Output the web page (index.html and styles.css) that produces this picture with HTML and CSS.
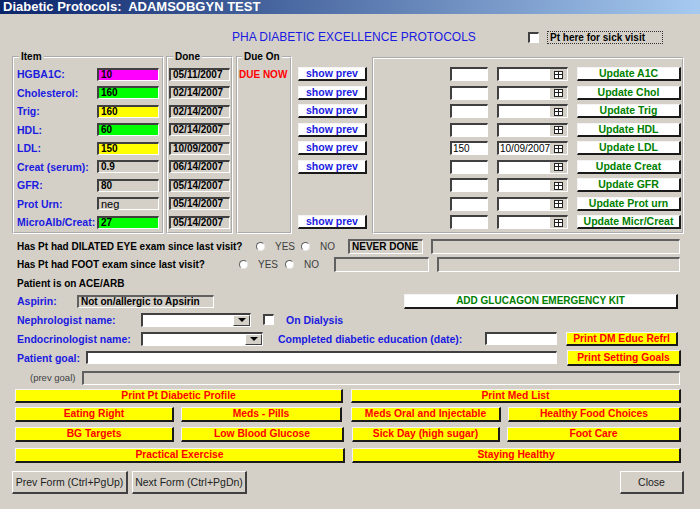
FILE: index.html
```html
<!DOCTYPE html>
<html lang="en">
<head>
    <meta charset="UTF-8">
    <meta name="viewport" content="width=device-width, initial-scale=1.0">
    <title>Diabetic Protocols</title>
    <link rel="stylesheet" href="styles.css">
</head>
<body>
    <div class="titlebar">Diabetic Protocols:&nbsp; ADAMSOBGYN TEST</div>

    <div class="header">
        <div class="form-title">PHA DIABETIC EXCELLENCE PROTOCOLS</div>
        <span class="checkbox"></span>
        <span class="sick">Pt here for sick visit</span>
    </div>

    <div class="groups">
        <fieldset class="grp grp-item">
            <legend>Item</legend>
            <div class="row"><span class="lbl">HGBA1C:</span><span class="val pink">10</span></div>
            <div class="row"><span class="lbl">Cholesterol:</span><span class="val lime">160</span></div>
            <div class="row"><span class="lbl">Trig:</span><span class="val yel">160</span></div>
            <div class="row"><span class="lbl">HDL:</span><span class="val lime">60</span></div>
            <div class="row"><span class="lbl">LDL:</span><span class="val yel">150</span></div>
            <div class="row"><span class="lbl">Creat (serum):</span><span class="val">0.9</span></div>
            <div class="row"><span class="lbl">GFR:</span><span class="val">80</span></div>
            <div class="row"><span class="lbl">Prot Urn:</span><span class="val plain">neg</span></div>
            <div class="row"><span class="lbl">MicroAlb/Creat:</span><span class="val lime">27</span></div>
        </fieldset>

        <fieldset class="grp grp-done">
            <legend>Done</legend>
            <div class="row"><span class="date">05/11/2007</span></div>
            <div class="row"><span class="date">02/14/2007</span></div>
            <div class="row"><span class="date">02/14/2007</span></div>
            <div class="row"><span class="date">02/14/2007</span></div>
            <div class="row"><span class="date">10/09/2007</span></div>
            <div class="row"><span class="date">06/14/2007</span></div>
            <div class="row"><span class="date">05/14/2007</span></div>
            <div class="row"><span class="date">05/14/2007</span></div>
            <div class="row"><span class="date">05/14/2007</span></div>
        </fieldset>

        <fieldset class="grp grp-due">
            <legend>Due On</legend>
            <div class="row"><span class="due">DUE NOW</span></div>
        </fieldset>

        <div class="prev-col">
            <div class="row"><span class="raised btn-prev">show prev</span></div>
            <div class="row"><span class="raised btn-prev">show prev</span></div>
            <div class="row"><span class="raised btn-prev">show prev</span></div>
            <div class="row"><span class="raised btn-prev">show prev</span></div>
            <div class="row"><span class="raised btn-prev">show prev</span></div>
            <div class="row"><span class="raised btn-prev">show prev</span></div>
            <div class="row"></div>
            <div class="row"></div>
            <div class="row"><span class="raised btn-prev">show prev</span></div>
        </div>

        <div class="panel">
            <div class="row"><span class="inp"></span><span class="datein"><span></span><span class="cal"><svg width="9" height="8" viewBox="0 0 9 8"><rect x="0.5" y="0.5" width="8" height="7" fill="#fff" stroke="#222"/><path d="M0 3.5h9M4.5 0v8" stroke="#222"/></svg></span></span><span class="raised btn-upd">Update A1C</span></div>
            <div class="row"><span class="inp"></span><span class="datein"><span></span><span class="cal"><svg width="9" height="8" viewBox="0 0 9 8"><rect x="0.5" y="0.5" width="8" height="7" fill="#fff" stroke="#222"/><path d="M0 3.5h9M4.5 0v8" stroke="#222"/></svg></span></span><span class="raised btn-upd">Update Chol</span></div>
            <div class="row"><span class="inp"></span><span class="datein"><span></span><span class="cal"><svg width="9" height="8" viewBox="0 0 9 8"><rect x="0.5" y="0.5" width="8" height="7" fill="#fff" stroke="#222"/><path d="M0 3.5h9M4.5 0v8" stroke="#222"/></svg></span></span><span class="raised btn-upd">Update Trig</span></div>
            <div class="row"><span class="inp"></span><span class="datein"><span></span><span class="cal"><svg width="9" height="8" viewBox="0 0 9 8"><rect x="0.5" y="0.5" width="8" height="7" fill="#fff" stroke="#222"/><path d="M0 3.5h9M4.5 0v8" stroke="#222"/></svg></span></span><span class="raised btn-upd">Update HDL</span></div>
            <div class="row"><span class="inp">150</span><span class="datein"><span>10/09/2007</span><span class="cal"><svg width="9" height="8" viewBox="0 0 9 8"><rect x="0.5" y="0.5" width="8" height="7" fill="#fff" stroke="#222"/><path d="M0 3.5h9M4.5 0v8" stroke="#222"/></svg></span></span><span class="raised btn-upd">Update LDL</span></div>
            <div class="row"><span class="inp"></span><span class="datein"><span></span><span class="cal"><svg width="9" height="8" viewBox="0 0 9 8"><rect x="0.5" y="0.5" width="8" height="7" fill="#fff" stroke="#222"/><path d="M0 3.5h9M4.5 0v8" stroke="#222"/></svg></span></span><span class="raised btn-upd">Update Creat</span></div>
            <div class="row"><span class="inp"></span><span class="datein"><span></span><span class="cal"><svg width="9" height="8" viewBox="0 0 9 8"><rect x="0.5" y="0.5" width="8" height="7" fill="#fff" stroke="#222"/><path d="M0 3.5h9M4.5 0v8" stroke="#222"/></svg></span></span><span class="raised btn-upd">Update GFR</span></div>
            <div class="row"><span class="inp"></span><span class="datein"><span></span><span class="cal"><svg width="9" height="8" viewBox="0 0 9 8"><rect x="0.5" y="0.5" width="8" height="7" fill="#fff" stroke="#222"/><path d="M0 3.5h9M4.5 0v8" stroke="#222"/></svg></span></span><span class="raised btn-upd">Update Prot urn</span></div>
            <div class="row"><span class="inp"></span><span class="datein"><span></span><span class="cal"><svg width="9" height="8" viewBox="0 0 9 8"><rect x="0.5" y="0.5" width="8" height="7" fill="#fff" stroke="#222"/><path d="M0 3.5h9M4.5 0v8" stroke="#222"/></svg></span></span><span class="raised btn-upd">Update Micr/Creat</span></div>
        </div>
    </div>

    <div class="line eye">
        <span class="q">Has Pt had DILATED EYE exam since last visit?</span>
        <span class="radio"></span><span class="opt opt-yes">YES</span>
        <span class="radio"></span><span class="opt opt-no">NO</span>
        <span class="box box-a">NEVER DONE</span>
        <span class="box box-b"></span>
    </div>

    <div class="line foot">
        <span class="q">Has Pt had FOOT exam since last visit?</span>
        <span class="radio"></span><span class="opt opt-yes">YES</span>
        <span class="radio"></span><span class="opt opt-no">NO</span>
        <span class="box box-a"></span>
        <span class="box box-b"></span>
    </div>

    <div class="line ace">Patient is on ACE/ARB</div>

    <div class="line aspirin">
        <span class="blue lbl-aspirin">Aspirin:</span>
        <span class="box box-aspirin">Not on/allergic to Apsirin</span>
        <span class="raised btn-glucagon">ADD GLUCAGON EMERGENCY KIT</span>
    </div>

    <div class="line nephro">
        <span class="blue lbl-doc">Nephrologist name:</span>
        <span class="combo combo-neph"><span></span><span class="drop"><i class="arrow"></i></span></span>
        <span class="checkbox dialysis-check"></span>
        <span class="blue dialysis">On Dialysis</span>
    </div>

    <div class="line endo">
        <span class="blue lbl-doc">Endocrinologist name:</span>
        <span class="combo combo-endo"><span></span><span class="drop"><i class="arrow"></i></span></span>
        <span class="blue lbl-edu">Completed diabetic education (date):</span>
        <span class="inp inp-edu"></span>
        <span class="raised ybtn btn-edu">Print DM Educ Refrl</span>
    </div>

    <div class="line goal">
        <span class="blue lbl-goal">Patient goal:</span>
        <span class="inp inp-goal"></span>
        <span class="raised ybtn btn-goals">Print Setting Goals</span>
    </div>

    <div class="line prevgoal">
        <span class="lbl-prevgoal">(prev goal)</span>
        <span class="box box-prevgoal"></span>
    </div>

    <div class="yrow yrow-1">
        <span class="raised ybtn w-profile">Print Pt Diabetic Profile</span>
        <span class="raised ybtn w-medlist">Print Med List</span>
    </div>
    <div class="yrow yrow-2">
        <span class="raised ybtn w-eating">Eating Right</span>
        <span class="raised ybtn w-pills">Meds - Pills</span>
        <span class="raised ybtn w-oral">Meds Oral and Injectable</span>
        <span class="raised ybtn w-healthy">Healthy Food Choices</span>
    </div>
    <div class="yrow yrow-3">
        <span class="raised ybtn w-eating">BG Targets</span>
        <span class="raised ybtn w-low">Low Blood Glucose</span>
        <span class="raised ybtn w-sick">Sick Day (high sugar)</span>
        <span class="raised ybtn w-foot">Foot Care</span>
    </div>
    <div class="yrow yrow-4">
        <span class="raised ybtn w-exercise">Practical Exercise</span>
        <span class="raised ybtn w-staying">Staying Healthy</span>
    </div>

    <div class="bottom">
        <span class="fbtn fbtn-prev">Prev Form (Ctrl+PgUp)</span>
        <span class="fbtn fbtn-next">Next Form (Ctrl+PgDn)</span>
        <span class="fbtn fbtn-close">Close</span>
    </div>
</body>
</html>
```

FILE: styles.css
```css
* {
    box-sizing: border-box;
}
body {
    margin: 0;
    width: 700px;
    height: 509px;
    overflow: hidden;
    background: #d4d0c8;
    font-family: "Liberation Sans", Arial, sans-serif;
    font-size: 10px;
    font-weight: bold;
    color: #000;
}

/* title bar + header */
.titlebar {
    height: 14px;
    padding-left: 3px;
    background: linear-gradient(to right, #0a246a, #a6caf0);
    color: #fff;
    font-size: 13px;
    line-height: 14px;
    white-space: nowrap;
}
.header {
    display: flex;
    align-items: flex-start;
    height: 38px;
    padding: 17px 0 0 232px;
}
.form-title {
    width: 296px;
    color: #1a1ae0;
    font-size: 12px;
    font-weight: normal;
    line-height: 12px;
    white-space: nowrap;
}
.checkbox {
    width: 11px;
    height: 11px;
    background: #fff;
    border-style: solid;
    border-width: 2px 1px 1px 2px;
    border-color: #404040 #fff #fff #404040;
}
.header .checkbox {
    margin-top: 1px;
}
.sick {
    margin-left: 8px;
    width: 116px;
    height: 13px;
    padding-left: 2px;
    border: 1px dotted #333;
    line-height: 11px;
    white-space: nowrap;
}

/* groups */
.groups {
    display: flex;
    height: 182px;
    padding-left: 12px;
}
.grp {
    margin: 0;
    padding: 3px 0 0 0;
    border: 2px groove #fff;
    min-width: 0;
}
.grp legend {
    margin-left: 4px;
    padding: 0 2px;
    font-size: 10px;
    line-height: 10px;
}
.row {
    display: flex;
    align-items: center;
    height: 18.5px;
    white-space: nowrap;
}
.grp-item {
    width: 152px;
    padding-left: 1px;
}
.lbl {
    width: 82px;
    padding-left: 2px;
    color: #1a1ae0;
    font-size: 10.5px;
}
.val, .date {
    height: 13px;
    padding-left: 2px;
    background: #d4d0c8;
    border-style: solid;
    border-width: 2px 1px 1px 2px;
    border-color: #404040 #fff #fff #404040;
    line-height: 10px;
}
.val {
    width: 62px;
}
.val.plain {
    font-weight: normal;
    font-size: 11px;
}
.pink { background: #ff00ff; }
.lime { background: #00ff00; }
.yel { background: #ffff00; }

.grp-done {
    width: 67px;
    margin-left: 2px;
    padding-left: 1px;
}
.date {
    width: 61px;
}
.grp-due {
    width: 56px;
    margin-left: 3px;
}
.due {
    color: #ff0000;
    padding-left: 1px;
}
.prev-col {
    width: 69px;
    margin-left: 6px;
    padding-top: 13px;
}

.raised {
    border-style: solid;
    border-width: 1px 2px 2px 1px;
    border-color: #f4f4f4 #1a1a1a #1a1a1a #f4f4f4;
    background: #fff;
    text-align: center;
    white-space: nowrap;
}
.btn-prev {
    width: 69px;
    height: 14px;
    color: #1a1ae0;
    font-size: 10.5px;
    line-height: 11px;
}

.panel {
    width: 312px;
    margin-left: 5px;
    margin-top: 5px;
    padding: 6px 0 0 76px;
    border: 2px groove #fff;
}
.inp {
    width: 38px;
    height: 14px;
    padding-left: 1px;
    background: #fff;
    border-style: solid;
    border-width: 2px 1px 1px 2px;
    border-color: #404040 #fff #fff #404040;
    font-weight: normal;
    line-height: 11px;
}
.datein {
    display: flex;
    justify-content: space-between;
    width: 71px;
    height: 14px;
    margin-left: 9px;
    padding-left: 1px;
    background: #fff;
    border-style: solid;
    border-width: 2px 1px 1px 2px;
    border-color: #404040 #fff #fff #404040;
    font-weight: normal;
    line-height: 11px;
}
.cal {
    display: flex;
    align-items: center;
    justify-content: center;
    width: 17px;
    background: #d4d0c8;
}
.btn-upd {
    width: 104px;
    height: 14px;
    margin-left: 9px;
    color: #008000;
    font-size: 10.5px;
    line-height: 11px;
}

/* lower form lines */
.line {
    display: flex;
    align-items: center;
    padding-left: 17px;
    white-space: nowrap;
}
.blue {
    color: #1a1ae0;
    font-size: 10.5px;
}
.eye {
    height: 18px;
    margin-top: 3px;
}
.foot {
    height: 19px;
}
.ace {
    height: 18px;
}
.aspirin {
    height: 18px;
}
.nephro, .endo, .goal {
    height: 19px;
}
.prevgoal {
    height: 21px;
}
.eye .q { width: 239px; }
.foot .q { width: 222px; }
.radio {
    width: 9px;
    height: 9px;
    border-radius: 50%;
    background: #fff;
    border: 1px solid;
    border-color: #606060 #e8e8e8 #e8e8e8 #606060;
}
.opt {
    margin-left: 10px;
    color: #404040;
    font-weight: normal;
}
.eye .opt-yes { width: 26px; }
.eye .opt-no { width: 28px; }
.foot .opt-yes { width: 27px; }
.foot .opt-no { width: 30px; }
.box {
    height: 15px;
    padding-left: 2px;
    background: #d4d0c8;
    border-style: solid;
    border-width: 2px 1px 1px 2px;
    border-color: #606060 #fff #fff #606060;
    line-height: 11px;
}
.eye .box-a { width: 75px; }
.eye .box-b { width: 249px; margin-left: 8px; }
.foot .box-a { width: 95px; }
.foot .box-b { width: 243px; margin-left: 8px; }

.lbl-aspirin { width: 60px; }
.box-aspirin {
    width: 137px;
    height: 13px;
    line-height: 10px;
}
.btn-glucagon {
    width: 274px;
    height: 15px;
    margin-left: 190px;
    color: #008000;
    line-height: 12px;
}

.lbl-doc { width: 124px; }
.combo {
    display: flex;
    justify-content: space-between;
    height: 14px;
    background: #fff;
    border-style: solid;
    border-width: 2px 1px 1px 2px;
    border-color: #404040 #fff #fff #404040;
}
.combo-neph { width: 110px; }
.combo-endo { width: 122px; }
.drop {
    display: flex;
    align-items: center;
    justify-content: center;
    width: 17px;
    background: #d4d0c8;
    border-style: solid;
    border-width: 1px 1px 1px 1px;
    border-color: #fff #404040 #404040 #fff;
}
.arrow {
    width: 0;
    height: 0;
    border-left: 4px solid transparent;
    border-right: 4px solid transparent;
    border-top: 4px solid #000;
}
.dialysis-check {
    margin-left: 12px;
}
.dialysis {
    margin-left: 12px;
}
.lbl-edu {
    width: 207px;
    margin-left: 15px;
}
.inp-edu {
    width: 72px;
    height: 13px;
}
.ybtn {
    background: #ffff00;
    color: #ff0000;
    font-size: 10.3px;
}
.btn-edu {
    width: 112px;
    height: 14px;
    margin-left: 9px;
    line-height: 11px;
}
.lbl-goal { width: 69px; }
.inp-goal {
    width: 471px;
    height: 13px;
}
.btn-goals {
    width: 114px;
    height: 16px;
    margin-left: 10px;
    line-height: 13px;
}
.prevgoal {
    padding-left: 30px;
}
.lbl-prevgoal {
    width: 52px;
    color: #404040;
    font-weight: normal;
    font-size: 9.5px;
}
.box-prevgoal {
    width: 598px;
    height: 14px;
}

/* yellow handout buttons */
.yrow {
    display: flex;
    padding-left: 15px;
}
.yrow .ybtn {
    height: 15px;
    line-height: 12px;
}
.yrow-1 { margin-top: 1px; }
.yrow-1 .ybtn { height: 14px; line-height: 11px; }
.yrow-2 { margin-top: 4px; }
.yrow-3 { margin-top: 5px; }
.yrow-4 { margin-top: 6px; }
.w-profile { width: 328px; }
.w-medlist { width: 330px; margin-left: 8px; }
.w-eating { width: 159px; }
.w-pills { width: 161px; margin-left: 7px; }
.w-oral { width: 150px; margin-left: 9px; }
.w-healthy { width: 173px; margin-left: 7px; }
.w-low { width: 163px; margin-left: 7px; }
.w-sick { width: 148px; margin-left: 8px; }
.w-foot { width: 174px; margin-left: 7px; }
.w-exercise { width: 330px; }
.w-staying { width: 329px; margin-left: 7px; }

/* form buttons */
.bottom {
    display: flex;
    margin-top: 8px;
    padding: 0 16px 0 12px;
}
.fbtn {
    height: 23px;
    background: #d4d0c8;
    border-style: solid;
    border-width: 1px 2px 2px 1px;
    border-color: #fff #404040 #404040 #fff;
    color: #222;
    font-weight: normal;
    font-size: 10.5px;
    line-height: 20px;
    text-align: center;
    white-space: nowrap;
}
.fbtn-prev { width: 116px; }
.fbtn-next { width: 115px; margin-left: 4px; }
.fbtn-close { width: 64px; margin-left: auto; }
```
